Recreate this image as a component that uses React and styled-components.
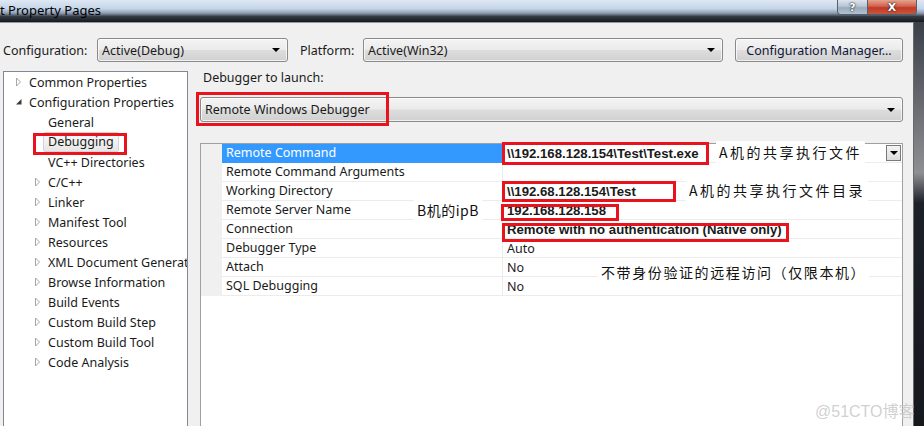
import React from 'react';
import styled, { createGlobalStyle, css } from 'styled-components';

const GlobalStyle = createGlobalStyle`
  html, body {
    margin: 0;
    padding: 0;
    background: #1b1f26;
    overflow: hidden;
  }
  #root {
    width: 924px;
    height: 426px;
  }
`;

const UI_FONT = `"Noto Sans", "Open Sans", "Noto Sans CJK SC", sans-serif`;
const CJK_FONT = `"Noto Sans CJK SC", "Noto Sans CJK JP", sans-serif`;
const RED = '#e8131c';

const Screen = styled.div`
  position: relative;
  width: 924px;
  height: 426px;
  overflow: hidden;
  display: flex;
  flex-direction: column;
  font-family: ${UI_FONT};
  font-size: 12.5px;
  color: #1a1a1a;
`;

const TitleBar = styled.div`
  flex: 0 0 22px;
  display: flex;
  align-items: flex-start;
  background: linear-gradient(
    to bottom,
    #dfe8f3 0%,
    #c3d4e8 40%,
    #8d9bb0 60%,
    #353a44 75%,
    #16191e 100%
  );
`;

const Title = styled.div`
  font-size: 13px;
  line-height: 20px;
  color: #000;
  flex: 1;
  white-space: nowrap;
`;

const CaptionButtons = styled.div`
  display: flex;
  margin-right: 7px;
`;

const Caption = styled.div`
  height: 14px;
  display: flex;
  align-items: center;
  justify-content: center;
  color: #fff;
  font-family: "DejaVu Sans", sans-serif;
  font-weight: bold;
  font-size: 11px;
  text-shadow: 0 0 2px #222, 0 0 1px #000;
  border: 1px solid #55606e;
  border-top: none;
  ${(p) =>
    p.$close
      ? css`
          width: 48px;
          border-left: none;
          border-radius: 0 0 4px 0;
          background: linear-gradient(to bottom, #e6a391 0%, #d2604c 45%, #c03a28 55%, #c9553d 100%);
        `
      : css`
          width: 29px;
          border-radius: 0 0 0 4px;
          background: linear-gradient(to bottom, #dce4ee 0%, #b7c4d3 45%, #9aabbf 55%, #b2c1d1 100%);
        `}
`;

const Frame = styled.div`
  flex: 1;
  display: flex;
`;

const Client = styled.div`
  width: 913px;
  background: #f0f0f0;
  border-top: 1px solid #8f9aa8;
  border-right: 1px solid #6a6a6a;
  display: flex;
  flex-direction: column;
`;

const Desktop = styled.div`
  flex: 1;
  background: linear-gradient(to bottom, #3b4048 0%, #8d8f93 35%, #1c2027 42%, #14181d 100%);
`;

const TopRow = styled.div`
  display: flex;
  align-items: center;
  height: 24px;
  margin-top: 15px;
  padding-left: 3px;
`;

const Label = styled.div`
  width: ${(p) => p.$w}px;
  margin-left: ${(p) => p.$ml || 0}px;
  white-space: nowrap;
`;

const aeroButton = css`
  box-sizing: border-box;
  border: 1px solid #8a8a8a;
  border-radius: 3px;
  background: linear-gradient(to bottom, #f4f4f4 0%, #ebebeb 48%, #dddddd 52%, #d0d0d0 100%);
  box-shadow: inset 0 0 0 1px rgba(255, 255, 255, 0.7);
`;

const Combo = styled.div`
  ${aeroButton};
  width: ${(p) => p.$w}px;
  height: ${(p) => p.$h || 24}px;
  display: flex;
  align-items: center;
  padding: 0 7px 0 4px;
  white-space: nowrap;
  & > span {
    flex: 1;
  }
`;

const Button = styled.div`
  ${aeroButton};
  width: 168px;
  height: 24px;
  margin-left: 12px;
  display: flex;
  align-items: center;
  justify-content: center;
  color: #10163a;
`;

const Arrow = styled.i`
  width: 0;
  height: 0;
  border-left: 4px solid transparent;
  border-right: 4px solid transparent;
  border-top: 4px solid #000;
`;

const Main = styled.div`
  display: flex;
  margin-top: 9px;
  padding-left: 3px;
`;

const Tree = styled.div`
  width: 183px;
  height: 380px;
  background: #fff;
  border: 1px solid #828790;
`;

const TreeRow = styled.div`
  height: 20px;
  display: flex;
  align-items: center;
  padding-left: ${(p) => (p.$level ? 30 : 11)}px;
  white-space: nowrap;
  overflow: hidden;
`;

const Toggle = styled.span`
  width: 14px;
  flex: 0 0 14px;
  display: flex;
  align-items: center;
`;

const TreeLabel = styled.span`
  ${(p) =>
    p.$selected
      ? css`
          margin-left: -5px;
          padding: 0 4px;
          height: 18px;
          line-height: 18px;
          border: 1px solid #d4d4d4;
          border-radius: 2px;
          background: linear-gradient(to bottom, #fbfbfb, #e6e6e6);
        `
      : ''}
`;

const RightPane = styled.div`
  width: 703px;
  margin-left: 12px;
  display: flex;
  flex-direction: column;
`;

const PaneLabel = styled.div`
  line-height: 14px;
  padding-left: 3px;
  margin-bottom: 12px;
`;

const Grid = styled.div`
  margin-top: 21px;
  height: 300px;
  background: #fff;
  border: 1px solid #a0a0a0;
`;

const Row = styled.div`
  display: grid;
  grid-template-columns: 21px 280px 1fr;
  height: 19px;
`;

const Gutter = styled.div`
  background: #f0f0f0;
`;

const NameCell = styled.div`
  padding-left: 4px;
  line-height: 18px;
  border-bottom: 1px solid #ececec;
  white-space: nowrap;
  ${(p) =>
    p.$selected &&
    css`
      background: #3399ff;
      color: #fff;
      border-bottom-color: #3399ff;
    `}
`;

const ValueCell = styled.div`
  display: flex;
  align-items: center;
  padding-left: 4px;
  border-left: 1px solid #ececec;
  border-bottom: 1px solid #ececec;
  white-space: nowrap;
  font-family: ${(p) => (p.$bold ? '"Liberation Sans", Arial, sans-serif' : UI_FONT)};
  font-weight: ${(p) => (p.$bold ? 'bold' : 'normal')};
  font-size: ${(p) => (p.$bold ? '13.2px' : '12.5px')};
  & > span {
    flex: 1;
  }
`;

const DropButton = styled.div`
  width: 15px;
  height: 16px;
  box-sizing: border-box;
  border: 1px solid #7a7a7a;
  background: linear-gradient(to bottom, #f4f4f4, #dcdcdc);
  display: flex;
  align-items: center;
  justify-content: center;
  margin-right: 1px;
`;

const RedBox = styled.div`
  position: absolute;
  box-sizing: border-box;
  border: 3px solid ${RED};
  left: ${(p) => p.$x}px;
  top: ${(p) => p.$y}px;
  width: ${(p) => p.$w}px;
  height: ${(p) => p.$h}px;
  pointer-events: none;
`;

const Note = styled.div`
  position: absolute;
  left: ${(p) => p.$x}px;
  top: ${(p) => p.$y}px;
  height: ${(p) => p.$h || 22}px;
  padding: 0 ${(p) => p.$pad || 3}px;
  display: flex;
  align-items: center;
  background: #fff;
  font-family: ${CJK_FONT};
  font-size: 14px;
  letter-spacing: ${(p) => p.$ls ?? 2.5}px;
  color: #111;
  white-space: nowrap;
`;

const Watermark = styled.div`
  position: absolute;
  left: 815px;
  top: 398px;
  font-family: "Liberation Sans", ${CJK_FONT};
  font-size: 16px;
  color: rgba(200, 200, 200, 0.85);
  white-space: nowrap;
`;

function Collapsed() {
  return (
    <svg width="7" height="10" viewBox="0 0 7 10">
      <path d="M1.5 1 L5.5 5 L1.5 9 Z" fill="#fff" stroke="#a6a6a6" strokeWidth="1" />
    </svg>
  );
}

function Expanded() {
  return (
    <svg width="8" height="8" viewBox="0 0 8 8">
      <path d="M6.5 1 L6.5 6.5 L1 6.5 Z" fill="#3c3c3c" />
    </svg>
  );
}

const tree = [
  { label: 'Common Properties', level: 0, toggle: 'c' },
  { label: 'Configuration Properties', level: 0, toggle: 'e' },
  { label: 'General', level: 1 },
  { label: 'Debugging', level: 1, selected: true },
  { label: 'VC++ Directories', level: 1 },
  { label: 'C/C++', level: 1, toggle: 'c' },
  { label: 'Linker', level: 1, toggle: 'c' },
  { label: 'Manifest Tool', level: 1, toggle: 'c' },
  { label: 'Resources', level: 1, toggle: 'c' },
  { label: 'XML Document Generator', level: 1, toggle: 'c' },
  { label: 'Browse Information', level: 1, toggle: 'c' },
  { label: 'Build Events', level: 1, toggle: 'c' },
  { label: 'Custom Build Step', level: 1, toggle: 'c' },
  { label: 'Custom Build Tool', level: 1, toggle: 'c' },
  { label: 'Code Analysis', level: 1, toggle: 'c' },
];

const props = [
  { name: 'Remote Command', value: '\\\\192.168.128.154\\Test\\Test.exe', bold: true, selected: true },
  { name: 'Remote Command Arguments', value: '' },
  { name: 'Working Directory', value: '\\\\192.68.128.154\\Test', bold: true },
  { name: 'Remote Server Name', value: '192.168.128.158', bold: true },
  { name: 'Connection', value: 'Remote with no authentication (Native only)', bold: true },
  { name: 'Debugger Type', value: 'Auto' },
  { name: 'Attach', value: 'No' },
  { name: 'SQL Debugging', value: 'No' },
];

export default function App() {
  return (
    <>
      <GlobalStyle />
      <Screen>
        <TitleBar>
          <Title>t Property Pages</Title>
          <CaptionButtons>
            <Caption>?</Caption>
            <Caption $close>X</Caption>
          </CaptionButtons>
        </TitleBar>
        <Frame>
          <Client>
            <TopRow>
              <Label $w={94}>Configuration:</Label>
              <Combo $w={191}>
                <span>Active(Debug)</span>
                <Arrow />
              </Combo>
              <Label $w={63} $ml={12}>Platform:</Label>
              <Combo $w={360}>
                <span>Active(Win32)</span>
                <Arrow />
              </Combo>
              <Button>Configuration Manager...</Button>
            </TopRow>
            <Main>
              <Tree>
                {tree.map((t) => (
                  <TreeRow key={t.label} $level={t.level}>
                    <Toggle>
                      {t.toggle === 'c' && <Collapsed />}
                      {t.toggle === 'e' && <Expanded />}
                    </Toggle>
                    <TreeLabel $selected={t.selected}>{t.label}</TreeLabel>
                  </TreeRow>
                ))}
              </Tree>
              <RightPane>
                <PaneLabel>Debugger to launch:</PaneLabel>
                <Combo $w={703} $h={25}>
                  <span>Remote Windows Debugger</span>
                  <Arrow />
                </Combo>
                <Grid>
                  {props.map((p) => (
                    <Row key={p.name}>
                      <Gutter />
                      <NameCell $selected={p.selected}>{p.name}</NameCell>
                      <ValueCell $bold={p.bold}>
                        <span>{p.value}</span>
                        {p.selected && (
                          <DropButton>
                            <Arrow />
                          </DropButton>
                        )}
                      </ValueCell>
                    </Row>
                  ))}
                </Grid>
              </RightPane>
            </Main>
          </Client>
          <Desktop />
        </Frame>

        <RedBox $x={33} $y={133} $w={94} $h={22} />
        <RedBox $x={196} $y={92} $w={193} $h={34} />
        <RedBox $x={502} $y={142} $w={207} $h={23} />
        <RedBox $x={502} $y={181} $w={174} $h={21} />
        <RedBox $x={501} $y={204} $w={118} $h={17} />
        <RedBox $x={502} $y={223} $w={287} $h={19} />

        <Note $x={716} $y={141}>A机的共享执行文件</Note>
        <Note $x={686} $y={179}>A机的共享执行文件目录</Note>
        <Note $x={414} $y={199} $ls={0.5}>B机的ipB</Note>
        <Note $x={598} $y={261} $ls={1.6}>不带身份验证的远程访问（仅限本机）</Note>

        <Watermark>@51CTO博客</Watermark>
      </Screen>
    </>
  );
}
